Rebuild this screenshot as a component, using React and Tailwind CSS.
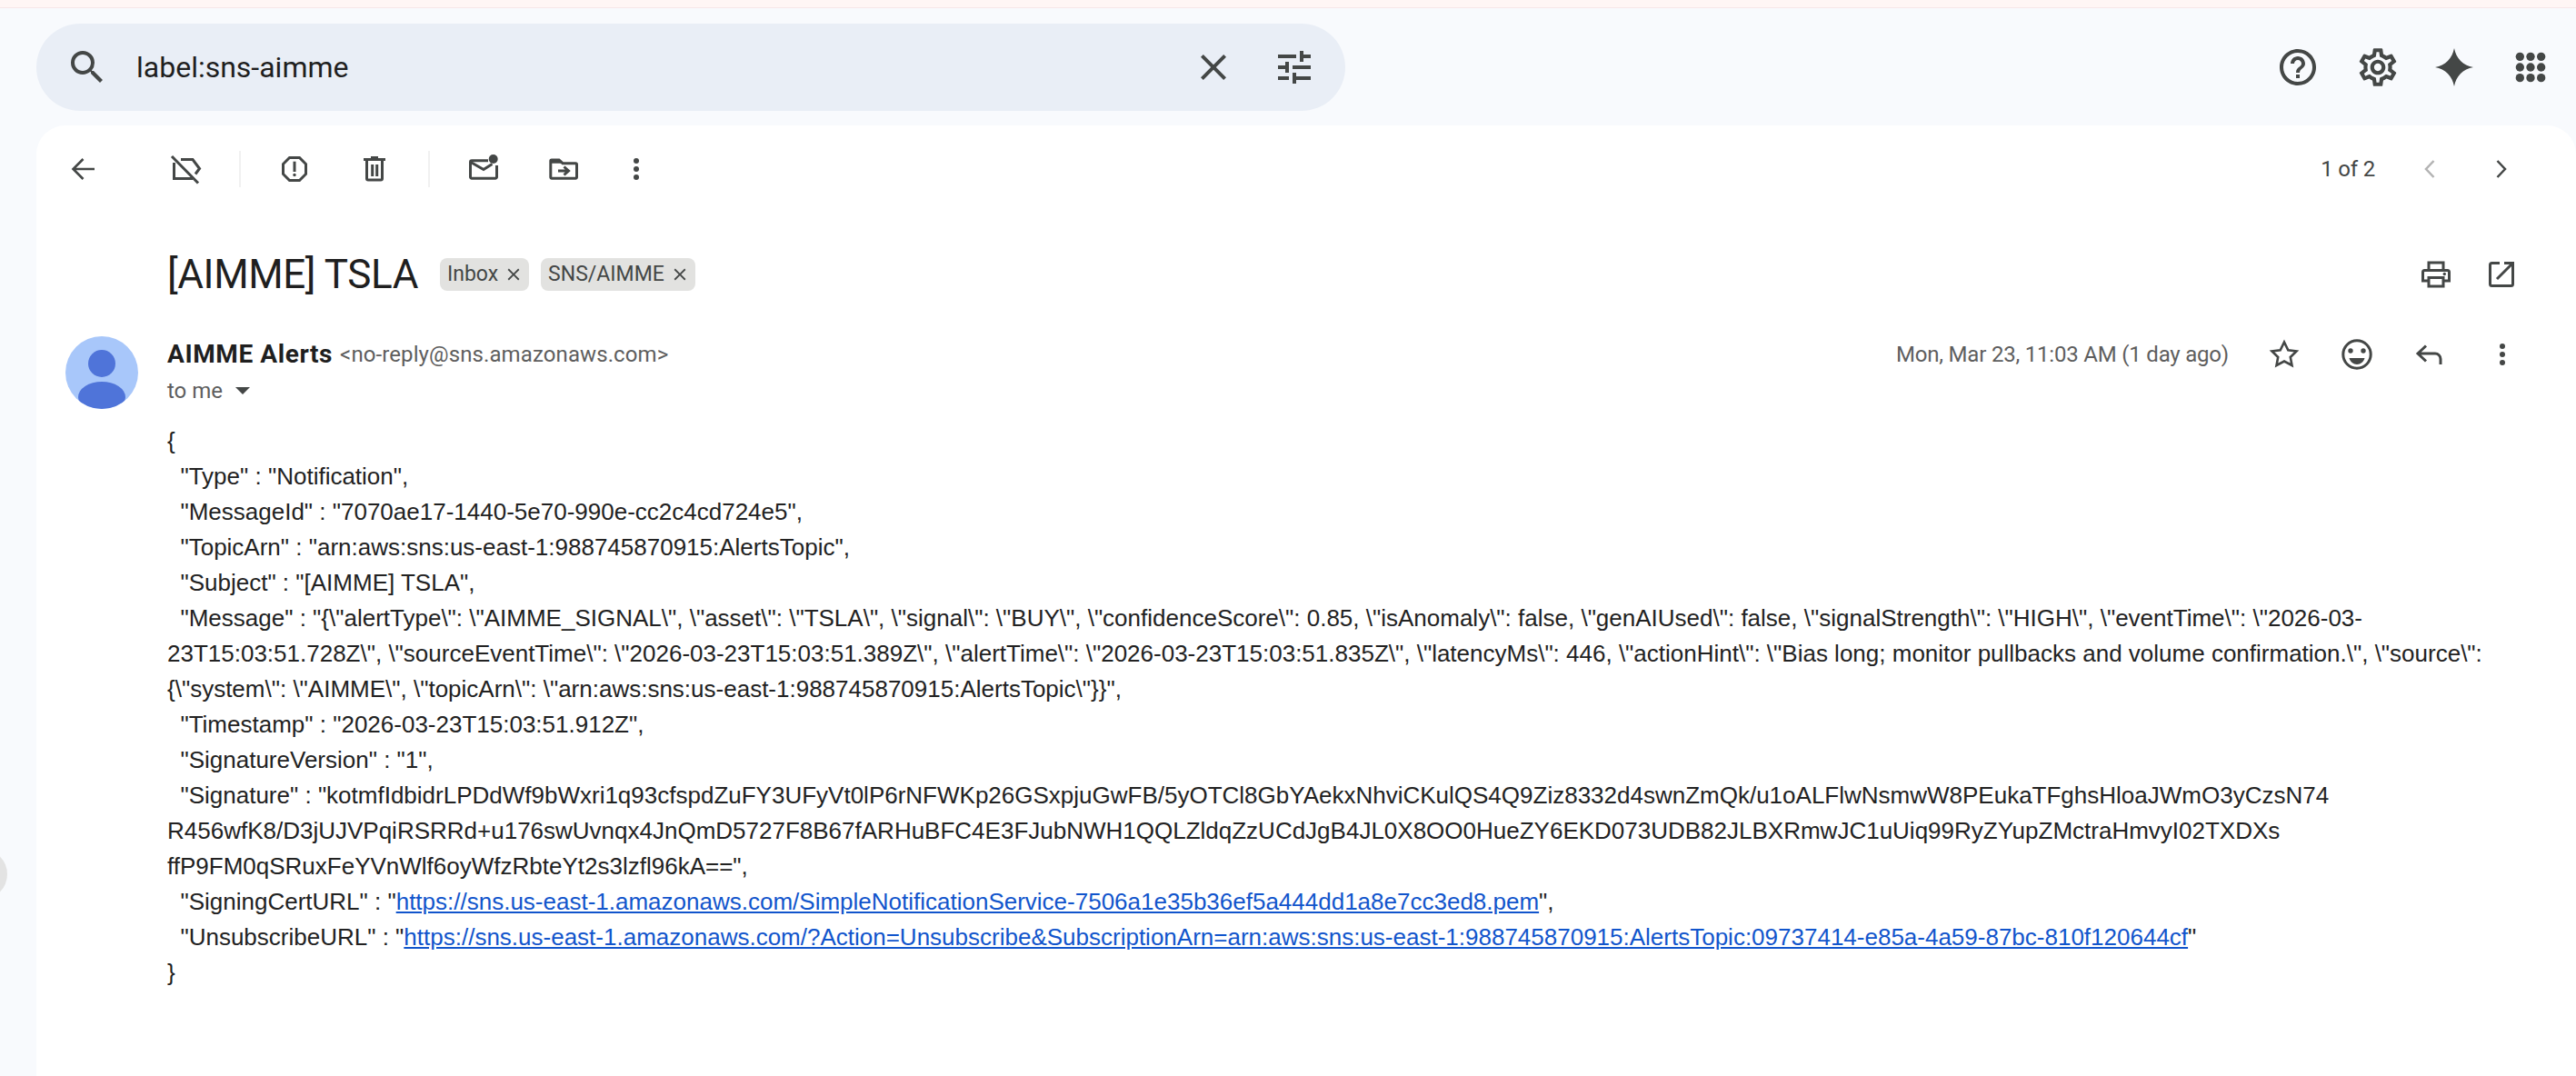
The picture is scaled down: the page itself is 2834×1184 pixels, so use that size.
import React from 'react';
import { MdClose, MdOutlineHelpOutline, MdOutlineSettings, MdSearch, MdTune } from 'react-icons/md';

const Btn = ({ children, className = 'w-20' }) => (
  <div className={`flex h-10 shrink-0 items-center justify-center text-[#444746] ${className}`}>{children}</div>
);

// 40x40 line icons, redrawn from the reference
const Icon = ({ children, stroke = 3 }) => (
  <svg width="40" height="40" viewBox="0 0 40 40" fill="none" stroke="currentColor" strokeWidth={stroke}>
    {children}
  </svg>
);

const BackIcon = () => (
  <Icon stroke={2.6}>
    <path d="M32 20H9M19.5 9L8.5 20L19.5 31" />
  </Icon>
);

const LabelOffIcon = () => (
  <Icon>
    <path d="M15 9.5H28L35.5 19.5L31 25.5M7.5 13V30.5H28M5 6L34 35.5" />
  </Icon>
);

const ReportIcon = () => (
  <Icon>
    <path d="M14.5 7.5h11l7 7v11l-7 7h-11l-7-7v-11z" />
    <path d="M20 11.7V23" />
    <circle cx="20" cy="26.5" r="1.7" fill="currentColor" stroke="none" />
  </Icon>
);

const TrashIcon = () => (
  <Icon>
    <path d="M8 9.5H32M16 7.5H24M11.5 9.5V30.5a1.5 1.5 0 0 0 1.5 1.5H27a1.5 1.5 0 0 0 1.5-1.5V9.5M17.7 15V28M22.7 15V28" />
  </Icon>
);

const UnreadIcon = () => (
  <Icon>
    <path d="M25 10.8H7a1.5 1.5 0 0 0-1.5 1.5V28.7a1.5 1.5 0 0 0 1.5 1.5H33a1.5 1.5 0 0 0 1.5-1.5V16" />
    <path d="M6 12.5L20 20.5L29.5 14.5" />
    <circle cx="30.7" cy="9" r="5" fill="currentColor" stroke="none" />
  </Icon>
);

const MoveIcon = () => (
  <Icon>
    <path d="M5.8 11a1 1 0 0 1 1-1H15l4 3.7H33.2a1.3 1.3 0 0 1 1.3 1.3V29a1.2 1.2 0 0 1-1.2 1.2H7a1.2 1.2 0 0 1-1.2-1.2Z" />
    <path d="M5 9h10l4 4.7H5z" fill="currentColor" stroke="none" />
    <path d="M14 22H24M20.5 17.5L25.5 22L20.5 26.5" />
  </Icon>
);

const MoreIcon = () => (
  <svg width="40" height="40" viewBox="0 0 40 40" fill="currentColor">
    <circle cx="20" cy="11" r="3" />
    <circle cx="20" cy="20" r="3" />
    <circle cx="20" cy="29" r="3" />
  </svg>
);

const ChevronLeft = () => (
  <Icon stroke={2.5}>
    <path d="M24.5 11L16 20L24.5 29" />
  </Icon>
);

const ChevronRight = () => (
  <Icon stroke={2.5}>
    <path d="M15.5 11L24 20L15.5 29" />
  </Icon>
);

const PrintIcon = () => (
  <Icon>
    <path d="M12 15V7H28V15M12 27H5.5V17.5a2 2 0 0 1 2-2H32.5a2 2 0 0 1 2 2V27H28M12 23.5H28V33H12Z" />
    <circle cx="29.3" cy="19.5" r="1.7" fill="currentColor" stroke="none" />
  </Icon>
);

const OpenIcon = () => (
  <Icon>
    <path d="M18 7.5H9.5a2 2 0 0 0-2 2V30.5a2 2 0 0 0 2 2H30.5a2 2 0 0 0 2-2V7.5H23M15 25L32 8" />
  </Icon>
);

const StarIcon = () => (
  <Icon stroke={2.6}>
    <path d="M20 6.5L24.3 15.3L33.5 16.4L26.8 23L28.5 32L20 27.5L11.5 32L13.2 23L6.5 16.4L15.7 15.3Z" />
  </Icon>
);

const EmojiIcon = () => (
  <Icon>
    <circle cx="20" cy="20" r="15.2" />
    <circle cx="13" cy="16" r="2.7" fill="currentColor" stroke="none" />
    <circle cx="27" cy="16" r="2.7" fill="currentColor" stroke="none" />
    <path d="M11.5 24h17c-1 4-4.5 7-8.5 7s-7.5-3-8.5-7z" fill="currentColor" stroke="none" />
  </Icon>
);

const ReplyIcon = () => (
  <Icon>
    <path d="M16 10.5L7 19L16 27.5M7 19H26a6 6 0 0 1 6 6V31" />
  </Icon>
);

const Sparkle = () => (
  <svg width="42" height="42" viewBox="0 0 24 24" fill="currentColor">
    <path d="M12 0C13.2 6.5 17.5 10.8 24 12C17.5 13.2 13.2 17.5 12 24C10.8 17.5 6.5 13.2 0 12C6.5 10.8 10.8 6.5 12 0Z" />
  </svg>
);

const Apps = () => (
  <svg width="40" height="40" viewBox="0 0 24 24" fill="currentColor">
    {[5, 12, 19].map((y) => [5, 12, 19].map((x) => <circle key={`${x}-${y}`} cx={x} cy={y} r="2.8" />))}
  </svg>
);

const Chip = ({ label, className }) => (
  <span className={`flex h-9 items-center rounded-lg bg-[#e2e2e0] pl-2 text-[23px] text-[#444746] ${className}`}>
    {label}
    <MdClose className="text-[22px]" />
  </span>
);

const Link = ({ children }) => <a className="text-[#1155cc] underline">{children}</a>;

const signature1 =
  '  "Signature" : "kotmfIdbidrLPDdWf9bWxri1q93cfspdZuFY3UFyVt0lP6rNFWKp26GSxpjuGwFB/5yOTCl8GbYAekxNhviCKulQS4Q9Ziz8332d4swnZmQk/u1oALFlwNsmwW8PEukaTFghsHloaJWmO3yCzsN74';
const signature2 =
  'R456wfK8/D3jUJVPqiRSRRd+u176swUvnqx4JnQmD5727F8B67fARHuBFC4E3FJubNWH1QQLZldqZzUCdJgB4JL0X8OO0HueZY6EKD073UDB82JLBXRmwJC1uUiq99RyZYupZMctraHmvyI02TXDXs';

const lines = [
  '{',
  '  "Type" : "Notification",',
  '  "MessageId" : "7070ae17-1440-5e70-990e-cc2c4cd724e5",',
  '  "TopicArn" : "arn:aws:sns:us-east-1:988745870915:AlertsTopic",',
  '  "Subject" : "[AIMME] TSLA",',
  '  "Message" : "{\\"alertType\\": \\"AIMME_SIGNAL\\", \\"asset\\": \\"TSLA\\", \\"signal\\": \\"BUY\\", \\"confidenceScore\\": 0.85, \\"isAnomaly\\": false, \\"genAIUsed\\": false, \\"signalStrength\\": \\"HIGH\\", \\"eventTime\\": \\"2026-03-',
  '23T15:03:51.728Z\\", \\"sourceEventTime\\": \\"2026-03-23T15:03:51.389Z\\", \\"alertTime\\": \\"2026-03-23T15:03:51.835Z\\", \\"latencyMs\\": 446, \\"actionHint\\": \\"Bias long; monitor pullbacks and volume confirmation.\\", \\"source\\":',
  '{\\"system\\": \\"AIMME\\", \\"topicArn\\": \\"arn:aws:sns:us-east-1:988745870915:AlertsTopic\\"}}",',
  '  "Timestamp" : "2026-03-23T15:03:51.912Z",',
  '  "SignatureVersion" : "1",',
  signature1,
  signature2,
  'ffP9FM0qSRuxFeYVnWlf6oyWfzRbteYt2s3lzfl96kA==",',
];

export default function App() {
  return (
    <div className="relative flex h-[1184px] flex-col overflow-hidden bg-[#f8fafd] font-['Roboto',sans-serif]">
      <div className="h-[9px] shrink-0 border-b border-[#f6e6e9] bg-[#fff6f5]" />

      <header className="flex h-[129px] shrink-0 items-start pl-10 pt-[17px]">
        <div className="flex h-24 w-[1440px] items-center rounded-[48px] bg-[#e9eef6] text-[#444746]">
          <MdSearch className="ml-8 text-[48px]" />
          <span className="ml-[30px] flex-1 text-[32px] text-[#1f1f1f]">label:sns-aimme</span>
          <MdClose className="mr-[41px] text-[48px]" />
          <MdTune className="mr-8 text-[48px]" />
        </div>
        <div className="ml-auto flex h-24 items-center pr-[6px]">
          <Btn className="w-[88px]"><MdOutlineHelpOutline className="text-[48px]" /></Btn>
          <Btn className="w-[88px]"><MdOutlineSettings className="text-[50px]" /></Btn>
          <Btn><Sparkle /></Btn>
          <Btn className="w-[88px]"><Apps /></Btn>
        </div>
      </header>

      <main className="ml-10 flex-1 rounded-t-[32px] bg-white">
        <div className="flex h-24 items-center pl-3 pr-[42px]">
          <Btn><BackIcon /></Btn>
          <Btn className="ml-8 w-20"><LabelOffIcon /></Btn>
          <div className="mx-[19px] h-10 w-[2px] bg-[#f1f1f1]" />
          <Btn><ReportIcon /></Btn>
          <Btn className="ml-2 w-20"><TrashIcon /></Btn>
          <div className="mx-[19px] h-10 w-[2px] bg-[#f1f1f1]" />
          <Btn><UnreadIcon /></Btn>
          <Btn className="ml-2 w-20"><MoveIcon /></Btn>
          <Btn className="ml-2 w-16"><MoreIcon /></Btn>
          <span className="ml-auto mr-5 text-[24px] tracking-[-0.2px] text-[#444746]">1 of 2</span>
          <Btn className="w-[79px] !text-[#b3b3b3]"><ChevronLeft /></Btn>
          <Btn><ChevronRight /></Btn>
        </div>

        <div className="mt-[26px] flex h-[84px] items-center pl-[144px] pr-[42px]">
          <h1 className="text-[44px] font-normal tracking-[-0.4px] text-[#1f1f1f]">[AIMME] TSLA</h1>
          <div className="ml-6 flex gap-[13px]">
            <Chip label="Inbox" className="gap-[6px] pr-[6px]" />
            <Chip label="SNS/AIMME" className="gap-[6px] pr-[6px]" />
          </div>
          <div className="ml-auto flex">
            <Btn className="w-16"><PrintIcon /></Btn>
            <Btn className="w-20"><OpenIcon /></Btn>
          </div>
        </div>

        <div className="mt-[26px] flex">
          <div className="w-[144px] shrink-0 pl-8">
            <svg width="80" height="80" viewBox="0 0 80 80">
              <clipPath id="avatar">
                <circle cx="40" cy="40" r="40" />
              </clipPath>
              <g clipPath="url(#avatar)">
                <rect width="80" height="80" fill="#a8c7fa" />
                <circle cx="40" cy="30" r="15" fill="#4f74d9" />
                <ellipse cx="40" cy="67" rx="26" ry="17" fill="#4f74d9" />
              </g>
            </svg>
          </div>
          <div className="min-w-0 flex-1 pr-[42px]">
            <div className="flex h-10 items-center">
              <span className="text-[28px] font-bold tracking-[0.6px] text-[#1f1f1f]">AIMME Alerts</span>
              <span className="ml-2 text-[24px] tracking-[0.1px] text-[#5e5e5e]">&lt;no-reply@sns.amazonaws.com&gt;</span>
              <span className="ml-auto mr-[21px] text-[24px] tracking-[-0.2px] text-[#5e5e5e]">Mon, Mar 23, 11:03 AM (1 day ago)</span>
              <Btn><StarIcon /></Btn>
              <Btn><EmojiIcon /></Btn>
              <Btn><ReplyIcon /></Btn>
              <Btn className="w-[79px]"><MoreIcon /></Btn>
            </div>
            <div className="mt-[2px] flex h-9 items-center text-[24px] text-[#5e5e5e]">
              to me
              <span className="ml-[14px] h-0 w-0 border-x-[8px] border-t-[8px] border-x-transparent border-t-[#444746]" />
            </div>
            <div className="mt-[18px] whitespace-pre font-['Liberation_Sans',sans-serif] text-[26px] leading-[39px] text-[#222222]">
              {lines.map((line, i) => (
                <div key={i}>{line}</div>
              ))}
              <div>
                {'  "SigningCertURL" : "'}
                <Link>https://sns.us-east-1.amazonaws.com/SimpleNotificationService-7506a1e35b36ef5a444dd1a8e7cc3ed8.pem</Link>
                {'",'}
              </div>
              <div>
                {'  "UnsubscribeURL" : "'}
                <Link>https://sns.us-east-1.amazonaws.com/?Action=Unsubscribe&amp;SubscriptionArn=arn:aws:sns:us-east-1:988745870915:AlertsTopic:09737414-e85a-4a59-87bc-810f120644cf</Link>
                {'"'}
              </div>
              <div>{'}'}</div>
            </div>
          </div>
        </div>
      </main>

      <div className="absolute left-[-48px] top-[934px] h-14 w-14 rounded-full bg-[#e3e3e3]" />
    </div>
  );
}
